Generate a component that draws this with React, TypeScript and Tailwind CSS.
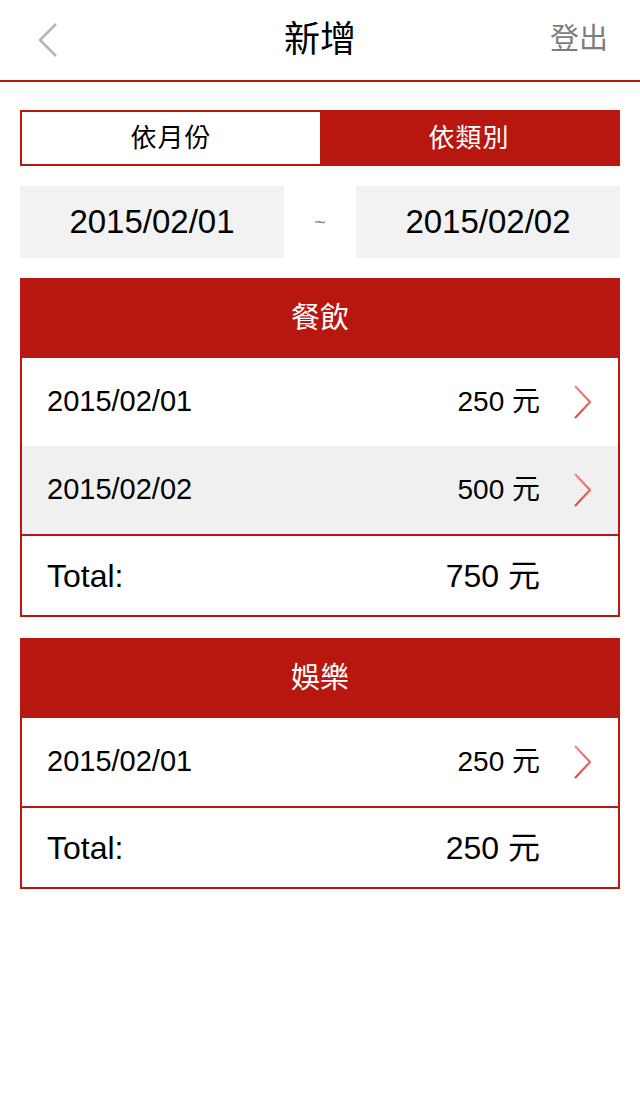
const font = {
  fontFamily:
    '"Liberation Sans", "Noto Sans CJK TC", "Noto Sans CJK SC", sans-serif',
};

interface Entry {
  date: string;
  amount: number;
}

interface Group {
  name: string;
  entries: Entry[];
  total: number;
}

const groups: Group[] = [
  {
    name: "餐飲",
    entries: [
      { date: "2015/02/01", amount: 250 },
      { date: "2015/02/02", amount: 500 },
    ],
    total: 750,
  },
  {
    name: "娛樂",
    entries: [{ date: "2015/02/01", amount: 250 }],
    total: 250,
  },
];

const Chevron = () => (
  <svg width="20" height="34" viewBox="0 0 20 34" fill="none">
    <defs>
      <linearGradient id="chev" x1="0" y1="0" x2="0" y2="1">
        <stop offset="0" stopColor="#f28a86" />
        <stop offset="1" stopColor="#dd4a45" />
      </linearGradient>
    </defs>
    <polyline
      points="3,1 18,17 3,33"
      stroke="url(#chev)"
      strokeWidth="2.2"
      fill="none"
    />
  </svg>
);

const GroupCard: React.FC<{ group: Group }> = ({ group }) => (
  <div className="border-2 border-[#b8170f]">
    <div className="h-[78px] bg-[#b8170f] flex items-center justify-center text-white text-[29px]">
      {group.name}
    </div>
    {group.entries.map((entry, i) => (
      <div
        key={i}
        className={`h-[88px] flex items-center pl-[25px] pr-[26px] ${
          i % 2 === 1 ? "bg-[#f0f0f0]" : "bg-white"
        }`}
      >
        <div className="text-[29px] text-black flex-1">{entry.date}</div>
        <div className="text-[28px] text-black mr-[32px]">
          {entry.amount} 元
        </div>
        <Chevron />
      </div>
    ))}
    <div className="h-[81px] border-t-2 border-[#b8170f] flex items-center pl-[25px] pr-[78px]">
      <div className="text-[32px] text-black flex-1">Total:</div>
      <div className="text-[32px] text-black">{group.total} 元</div>
    </div>
  </div>
);

export default function App() {
  return (
    <div className="w-[640px] min-h-[1096px] bg-white" style={font}>
      <div className="h-[82px] border-b-2 border-[#b8170f] grid grid-cols-3 items-center px-[36px]">
        <svg width="24" height="34" viewBox="0 0 24 34" fill="none">
          <polyline
            points="20,1 4,17 20,33"
            stroke="#b5b5b5"
            strokeWidth="2.5"
            fill="none"
          />
        </svg>
        <div className="text-[36px] text-black justify-self-center">新增</div>
        <div className="text-[29px] text-[#7d7d7d] justify-self-end -mr-[4px]">
          登出
        </div>
      </div>

      <div className="px-5">
        <div className="mt-[28px] h-[56px] border-2 border-[#b8170f] flex">
          <div className="flex-1 bg-white flex items-center justify-center text-[26px] text-black tracking-[1px]">
            依月份
          </div>
          <div className="flex-1 bg-[#b8170f] flex items-center justify-center text-[26px] text-white tracking-[1px]">
            依類別
          </div>
        </div>

        <div className="mt-5 h-[72px] flex items-center">
          <div className="w-[264px] h-full bg-[#f2f2f2] flex items-center justify-center text-[33px] text-black">
            2015/02/01
          </div>
          <div className="flex-1 flex items-center justify-center text-[20px] text-[#888]">
            ~
          </div>
          <div className="w-[264px] h-full bg-[#f2f2f2] flex items-center justify-center text-[33px] text-black">
            2015/02/02
          </div>
        </div>

        <div className="mt-5 flex flex-col gap-[21px]">
          {groups.map((g) => (
            <GroupCard key={g.name} group={g} />
          ))}
        </div>
      </div>
    </div>
  );
}
